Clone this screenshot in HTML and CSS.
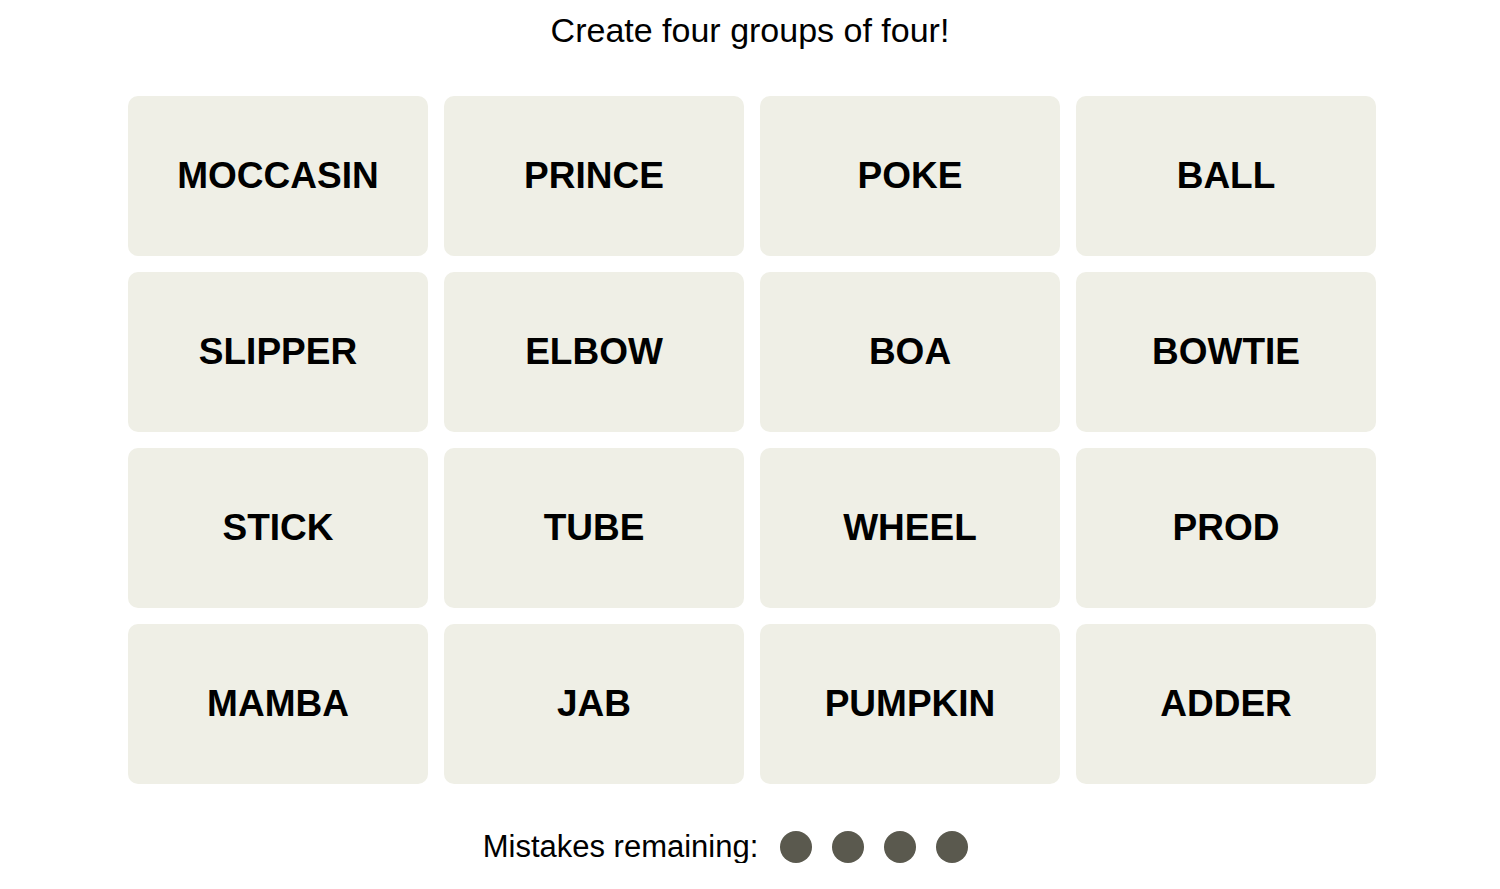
FILE: index.html
```html
<!DOCTYPE html>
<html lang="en">
<head>
    <meta charset="UTF-8">
    <meta name="viewport" content="width=device-width, initial-scale=1.0">
    <title>Connections</title>
    <link rel="stylesheet" href="styles.css">
</head>
<body>
    <main class="game">
        <h2 class="prompt">Create four groups of four!</h2>

        <div class="board">
            <button class="tile">MOCCASIN</button>
            <button class="tile">PRINCE</button>
            <button class="tile">POKE</button>
            <button class="tile">BALL</button>
            <button class="tile">SLIPPER</button>
            <button class="tile">ELBOW</button>
            <button class="tile">BOA</button>
            <button class="tile">BOWTIE</button>
            <button class="tile">STICK</button>
            <button class="tile">TUBE</button>
            <button class="tile">WHEEL</button>
            <button class="tile">PROD</button>
            <button class="tile">MAMBA</button>
            <button class="tile">JAB</button>
            <button class="tile">PUMPKIN</button>
            <button class="tile">ADDER</button>
        </div>

        <div class="mistakes">
            <p>Mistakes remaining:</p>
            <span class="dot"></span>
            <span class="dot"></span>
            <span class="dot"></span>
            <span class="dot"></span>
        </div>
    </main>
</body>
</html>
```

FILE: styles.css
```css
:root {
    --tile-bg: #efefe6;
    --dot-color: #5a594e;
    --text-color: #000;
    --font-family: "Liberation Sans", Arial, sans-serif;
}

body {
    margin: 0;
    background-color: #fff;
    color: var(--text-color);
    font-family: var(--font-family);
}

.game {
    display: flex;
    flex-direction: column;
    align-items: center;
    padding-left: 4px;
}

.prompt {
    margin: 11px 0 0;
    font-size: 34px;
    font-weight: normal;
    line-height: 38px;
    margin-left: -4px;
}

.board {
    display: grid;
    grid-template-columns: repeat(4, 300px);
    grid-auto-rows: 160px;
    gap: 16px;
    margin-top: 47px;
}

.tile {
    background-color: var(--tile-bg);
    border: none;
    border-radius: 10px;
    font-family: var(--font-family);
    font-size: 37px;
    font-weight: bold;
    color: var(--text-color);
    cursor: pointer;
}

.mistakes {
    display: flex;
    align-items: center;
    gap: 20px;
    margin-top: 47px;
    margin-left: -53px;
}

.mistakes p {
    margin: 0 2px 0 0;
    font-size: 31px;
    line-height: 32px;
}

.dot {
    width: 32px;
    height: 32px;
    border-radius: 50%;
    background-color: var(--dot-color);
}
```
